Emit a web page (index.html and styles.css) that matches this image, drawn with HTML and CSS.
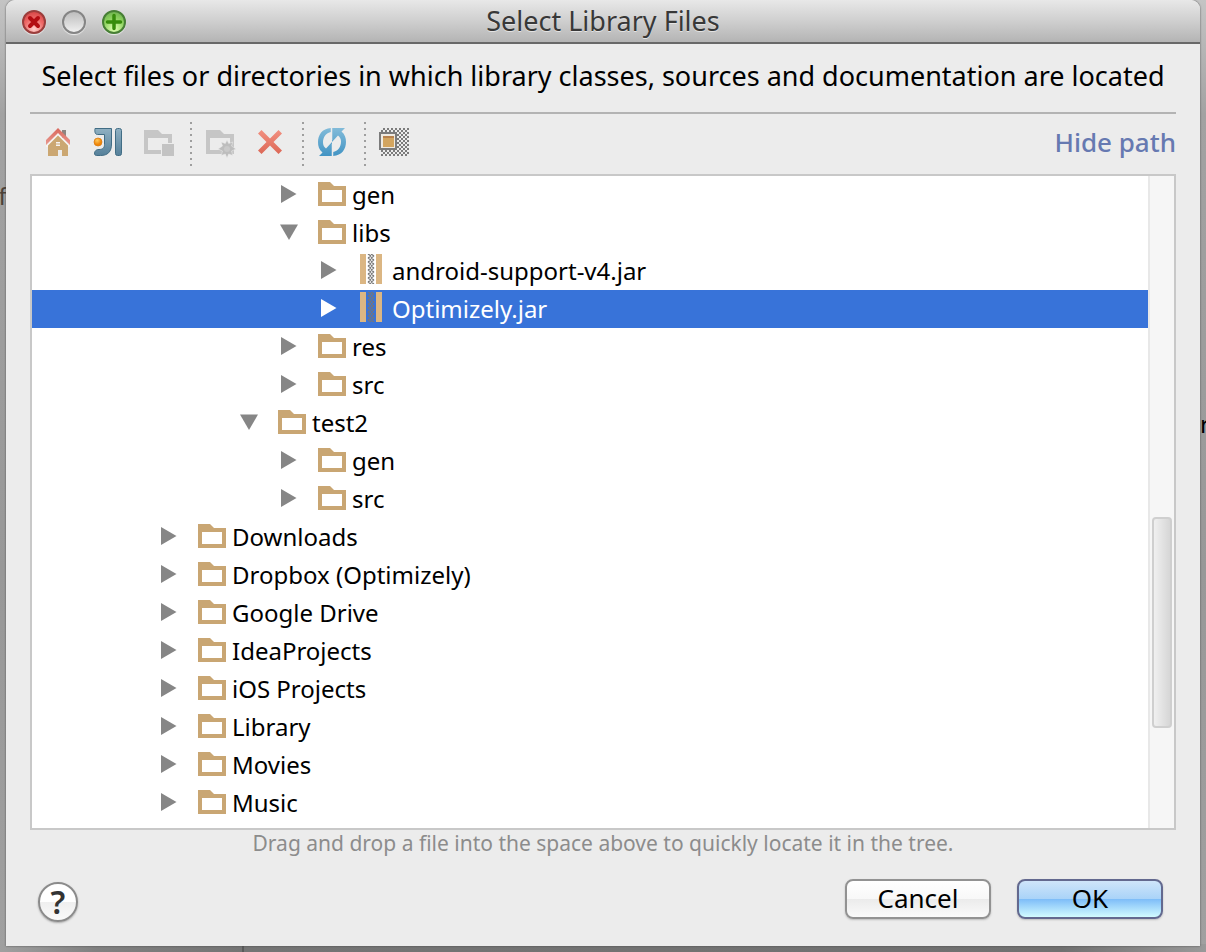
FILE: index.html
```html
<!DOCTYPE html>
<html lang="en">
<head>
<meta charset="utf-8">
<title>Select Library Files</title>
<link rel="stylesheet" href="styles.css">
</head>
<body>
<svg class="defs" aria-hidden="true">
  <defs>
    <symbol id="folder" viewBox="0 0 28 24"><path fill="#c9a673" fill-rule="evenodd" d="M0 0h12l4 4h12v20H0zM4 8v12h20V8z"/></symbol>
    <symbol id="jar" viewBox="0 0 28 30"><path fill="#dbb683" d="M2 0h6v30H2zM18 0h6v30h-6z"/><path fill="none" stroke="#777" stroke-width="1.300" d="M10 0l3 2M13 0l3 2M10 4l3-2M13 4l3-2M10 4l3 2M13 4l3 2M10 8l3-2M13 8l3-2M10 8l3 2M13 8l3 2M10 12l3-2M13 12l3-2M10 12l3 2M13 12l3 2M10 16l3-2M13 16l3-2M10 16l3 2M13 16l3 2M10 20l3-2M13 20l3-2M10 20l3 2M13 20l3 2M10 24l3-2M13 24l3-2M10 24l3 2M13 24l3 2M10 28l3-2M13 28l3-2M10 28l3 2M13 28l3 2"/></symbol>
    <symbol id="arrow" viewBox="0 0 18 18"><path fill="currentColor" d="M1 0l15.500 9L1 18z"/></symbol>
    <symbol id="arrow-open" viewBox="0 0 18 18"><path fill="currentColor" d="M0 1.500h18L9 17z"/></symbol>
    <linearGradient id="steel" x2="0" y2="1"><stop stop-color="#8fb0c2"/><stop offset="1" stop-color="#55809a"/></linearGradient>
    <linearGradient id="roof" x2="0" y2="1"><stop stop-color="#d9675c"/><stop offset="1" stop-color="#e99a90"/></linearGradient>
    <linearGradient id="cross" x2="0" y2="1"><stop stop-color="#f29080"/><stop offset="1" stop-color="#dc6857"/></linearGradient>
    <linearGradient id="sync" x2="0" y2="1"><stop stop-color="#82bbd9"/><stop offset="1" stop-color="#4294c4"/></linearGradient>
    <radialGradient id="orange" cx=".4" cy=".3"><stop stop-color="#ffc95c"/><stop offset="1" stop-color="#ef8609"/></radialGradient>
    <pattern id="checker" x="3" y="2" width="4" height="4" patternUnits="userSpaceOnUse"><path fill="#7b7b7b" d="M2 0h2v2H2zM0 2h2v2H0z"/></pattern>
  </defs>
</svg>
<span class="behind behind-left" aria-hidden="true">of</span>
<span class="behind behind-right" aria-hidden="true">r</span>
<main class="dialog">
  <header class="titlebar">
    <div class="lights">
      <button class="light red" aria-label="Close"><svg viewBox="0 0 24 24"><path d="M8 8l8 8M16 8l-8 8" stroke="#b30d12" stroke-width="4" stroke-linecap="round"/></svg></button>
      <button class="light gray" aria-label="Minimize"></button>
      <button class="light green" aria-label="Zoom"><svg viewBox="0 0 24 24"><path d="M12 5.500v13M5.500 12h13" stroke="#378c0c" stroke-width="3.500" stroke-linecap="round"/></svg></button>
    </div>
    <h1 class="title">Select Library Files</h1>
  </header>
  <div class="content">
    <p class="prompt">Select files or directories in which library classes, sources and documentation are located</p>
    <div class="toolbar">
      <button class="tool" aria-label="Home"><svg viewBox="0 0 32 32"><path fill="#8d8581" d="M20 4h4v8h-4z"/><path fill="#f6f4f2" d="M16 7L4 19v2h24v-2z"/><path fill="url(#roof)" d="M16 2l12 12v5L16 7 4 19v-5z"/><path fill="#cba772" d="M16 9.500l10 10V30h-6v-6h-4v6H6V19.500z"/><path fill="#f6f4f2" d="M14 16h4v4h-4z"/><path stroke="#cba772" d="M14 18h4"/></svg></button>
      <button class="tool" aria-label="Project directory"><svg viewBox="0 0 32 32"><path fill="url(#steel)" stroke="#416d85" stroke-width="1" d="M3 2.500h16.500V18c0 8-4 11.500-11 11.500H4.500c-2 0-2.500-2-1.500-4 1-1.500 2-2 4-2 4 0 5.500-2 5.500-5V8.500H5.500c-2.500 0-3-3-2.500-6z"/><rect x="23.500" y="2.500" width="6" height="27" rx="2" fill="url(#steel)" stroke="#416d85"/><circle cx="6" cy="16" r="4" fill="url(#orange)" stroke="#d8790f" stroke-width=".7"/></svg></button>
      <button class="tool" aria-label="Module directory" disabled><svg viewBox="0 0 32 32"><path fill="#c6c6c6" fill-rule="evenodd" d="M2 4h14l4 4h10v20H2zM6 12v12h20V12z"/><path fill="#c3c3c3" stroke="#ececec" d="M19.500 17.500h13v13h-13z"/></svg></button>
      <span class="divider"></span>
      <button class="tool" aria-label="New folder" disabled><svg viewBox="0 0 32 32"><path fill="#c6c6c6" fill-rule="evenodd" d="M2 4h14l4 4h10v20H2zM6 12v12h20V12z"/><path fill="#bdbdbd" stroke="#ececec" stroke-width=".5" d="M23 14l1.700 3.500 4.100-1.500-1.300 4 4.500 3-4.500 2 1.300 4.500-4.100-1.500L23 32l-1.700-4-4.100 1.500 1.300-4.500-4.500-2 4.500-3-1.300-4 4.100 1.500z"/><circle cx="23" cy="23" r="3" fill="#c9c9c9"/></svg></button>
      <button class="tool" aria-label="Delete"><svg viewBox="0 0 32 32"><path fill="url(#cross)" d="M7.500 4l8.500 8.500L24.500 4 28 7.500 19.500 16l8.500 8.500-3.500 3.500-8.500-8.500L7.500 28 4 24.500l8.500-8.500L4 7.500z"/></svg></button>
      <span class="divider"></span>
      <button class="tool" aria-label="Refresh"><svg viewBox="0 0 32 32"><g fill="url(#sync)"><path d="M15 2C6 2.500 2 9 2 16c0 4 1 7.500 4.500 10.500L3 30h13V16l-6 6.500C8 21 7 19 7 16.500 7 11 10 7 15 6z"/><path d="M17 30c9-.5 13-7 13-14 0-4-1-7.500-4.500-10.500L29 2H16v14l6-6.500c2 1.500 3 3.500 3 6 0 5.500-3 9.500-8 10.500z"/></g><path stroke="#ececec" stroke-width="1.500" d="M15.500 2v12M16.500 18v12"/></svg></button>
      <span class="divider"></span>
      <button class="tool" aria-label="Show hidden files"><svg viewBox="0 0 32 32"><path fill="url(#checker)" d="M3 2h28v28H3z"/><path fill="#efeae2" stroke="#7b7b7b" stroke-width="2" d="M2 7h16v16H2z"/><path fill="#d3a55f" d="M5 10h11v11H5z"/><path fill="#b8824d" d="M5 10h11v2H5z"/></svg></button>
      <a class="hide-path" href="#">Hide path</a>
    </div>
    <div class="tree-box">
      <ul class="tree" role="tree" aria-label="Files">
        <li class="row l3" role="treeitem"><svg class="arrow"><use href="#arrow"/></svg><svg class="icon"><use href="#folder"/></svg>gen</li>
        <li class="row l3" role="treeitem"><svg class="arrow"><use href="#arrow-open"/></svg><svg class="icon"><use href="#folder"/></svg>libs</li>
        <li class="row l4" role="treeitem"><svg class="arrow"><use href="#arrow"/></svg><svg class="icon jar"><use href="#jar"/></svg>android-support-v4.jar</li>
        <li class="row l4 selected" role="treeitem" aria-selected="true"><svg class="arrow"><use href="#arrow"/></svg><svg class="icon jar"><use href="#jar"/></svg>Optimizely.jar</li>
        <li class="row l3" role="treeitem"><svg class="arrow"><use href="#arrow"/></svg><svg class="icon"><use href="#folder"/></svg>res</li>
        <li class="row l3" role="treeitem"><svg class="arrow"><use href="#arrow"/></svg><svg class="icon"><use href="#folder"/></svg>src</li>
        <li class="row l2" role="treeitem"><svg class="arrow"><use href="#arrow-open"/></svg><svg class="icon"><use href="#folder"/></svg>test2</li>
        <li class="row l3" role="treeitem"><svg class="arrow"><use href="#arrow"/></svg><svg class="icon"><use href="#folder"/></svg>gen</li>
        <li class="row l3" role="treeitem"><svg class="arrow"><use href="#arrow"/></svg><svg class="icon"><use href="#folder"/></svg>src</li>
        <li class="row" role="treeitem"><svg class="arrow"><use href="#arrow"/></svg><svg class="icon"><use href="#folder"/></svg>Downloads</li>
        <li class="row" role="treeitem"><svg class="arrow"><use href="#arrow"/></svg><svg class="icon"><use href="#folder"/></svg>Dropbox (Optimizely)</li>
        <li class="row" role="treeitem"><svg class="arrow"><use href="#arrow"/></svg><svg class="icon"><use href="#folder"/></svg>Google Drive</li>
        <li class="row" role="treeitem"><svg class="arrow"><use href="#arrow"/></svg><svg class="icon"><use href="#folder"/></svg>IdeaProjects</li>
        <li class="row" role="treeitem"><svg class="arrow"><use href="#arrow"/></svg><svg class="icon"><use href="#folder"/></svg>iOS Projects</li>
        <li class="row" role="treeitem"><svg class="arrow"><use href="#arrow"/></svg><svg class="icon"><use href="#folder"/></svg>Library</li>
        <li class="row" role="treeitem"><svg class="arrow"><use href="#arrow"/></svg><svg class="icon"><use href="#folder"/></svg>Movies</li>
        <li class="row" role="treeitem"><svg class="arrow"><use href="#arrow"/></svg><svg class="icon"><use href="#folder"/></svg>Music</li>
      </ul>
      <div class="track"><div class="thumb"></div></div>
    </div>
    <p class="hint">Drag and drop a file into the space above to quickly locate it in the tree.</p>
    <footer class="footer">
      <button class="help" aria-label="Help">?</button>
      <div class="actions">
        <button class="btn">Cancel</button>
        <button class="btn primary">OK</button>
      </div>
    </footer>
  </div>
</main>
</body>
</html>
```
FILE: styles.css
```css
* { box-sizing: border-box; }
body {
  margin: 0;
  min-height: 100vh;
  display: flex;
  position: relative;
  overflow: hidden;
  padding: 0 6px 6px;
  font-family: "Noto Sans", "Open Sans", sans-serif;
  font-size: 24px;
  color: #000;
  background:
    linear-gradient(#5a5a5a, #5a5a5a) 242px 100% / 2px 8px no-repeat,
    linear-gradient(90deg, #a0a0a0, #808080 8%, #747474 20%, #707070 88%, #999) 0 100% / 100% 8px no-repeat,
    linear-gradient(#c4c4c4, #a2a2a2 12%, #989898 60%, #a0a0a0);
}
button { font: inherit; color: inherit; padding: 0; border: 0; background: none; }
h1, p, ul { margin: 0; padding: 0; }
.defs { position: absolute; width: 0; height: 0; }
.behind { position: absolute; line-height: 24px; }
.behind-left { left: -16px; top: 184px; color: #4c4238; }
.behind-right { left: calc(100% - 6px); top: 412px; }
.dialog {
  position: relative;
  flex: 1;
  display: flex;
  flex-direction: column;
  background: #ececec;
  border-radius: 9px 9px 0 0;
  box-shadow: 0 0 2px #444;
}
.titlebar {
  display: grid;
  grid-template-columns: 1fr auto 1fr;
  align-items: center;
  height: 44px;
  padding: 0 16px;
  background: linear-gradient(#e8e8e8, #cfcfcf 50%, #b4b4b4);
  border-bottom: 2px solid #686868;
  border-radius: 9px 9px 0 0;
}
.lights { display: flex; gap: 16px; padding-top: 2px; }
.light {
  width: 24px;
  height: 24px;
  border-radius: 50%;
  border: 2px solid #777;
  box-shadow: 0 1px 1px #eee;
}
.light svg { display: block; width: 24px; height: 24px; margin: -2px; }
.red { border-color: #9b3e3c; background: radial-gradient(circle at 50% 85%, #ffd0cc, #ef6b69 50%, #cf3b3c); }
.gray { border-color: #858585; background: linear-gradient(#bdbdbd, #d6d6d6 50%, #f0f0f0); }
.green { border-color: #477f35; background: radial-gradient(circle at 50% 85%, #e0ffb4, #8dd25f 55%, #66a94b); }
.title { font-size: 27px; font-weight: 400; line-height: 42px; color: #383838; text-shadow: 0 1px 0 #e4e4e4; }
.content { flex: 1; display: flex; flex-direction: column; padding: 0 24px; }
.prompt {
  height: 70px;
  line-height: 64px;
  font-size: 27px;
  text-align: center;
  white-space: nowrap;
  border-bottom: 2px solid #b3b3b3;
}
.toolbar { display: flex; align-items: center; height: 60px; padding: 0 0 4px 3px; }
.tool { width: 50px; height: 32px; }
.tool svg { display: block; width: 32px; height: 32px; margin: 0 auto; overflow: visible; }
.divider {
  width: 12px;
  height: 44px;
  margin-top: 4px;
  background: repeating-linear-gradient(#9e9e9e 0 2px, transparent 2px 6px) 7px 0 / 2px 100% no-repeat;
}
.hide-path { margin-left: auto; font-size: 26px; font-weight: 500; color: #6679b1; text-decoration: none; }
.tree-box { flex: 1; display: flex; background: #fff; border: 2px solid #c8c8c8; }
.tree { flex: 1; list-style: none; }
.row { display: flex; align-items: center; height: 38px; line-height: 38px; padding-left: 128px; }
.l2 { padding-left: 208px; }
.l3 { padding-left: 248px; }
.l4 { padding-left: 288px; }
.arrow { width: 18px; height: 18px; color: #868686; margin: 0 20px 2px 0; overflow: visible; }
.icon { width: 28px; height: 24px; margin: 0 6px 2px 0; }
.jar { height: 30px; margin-bottom: 4px; }
.selected { color: #fff; background: #3873d9; }
.selected .arrow { color: #fff; }
.track {
  display: flex;
  width: 26px;
  padding: 0 2px;
  flex-direction: column;
  background: #f6f6f6;
  border-left: 2px solid #e8e8e8;
}
.track::before { content: ""; flex: 342 0 0; }
.track::after { content: ""; flex: 100 0 0; }
.thumb {
  flex: 208 0 0;
  width: 20px;
  border: 2px solid #cfcfcf;
  border-radius: 4px;
  background: linear-gradient(90deg, #f0f0f0, #d6d6d6);
}
.hint { line-height: 26px; font-size: 21px; text-align: center; color: #8c8c8c; }
.footer { display: flex; justify-content: space-between; align-items: center; height: 90px; padding: 0 13px 4px 8px; }
.help {
  width: 40px;
  height: 40px;
  margin-top: 6px;
  border: 2px solid #8b8b8b;
  border-radius: 50%;
  font-size: 32px;
  font-weight: 600;
  line-height: 36px;
  color: #333;
  background: linear-gradient(#fff 50%, #efefef 50%, #fafafa);
  box-shadow: 0 1px 2px #aaa;
}
.actions { display: flex; gap: 26px; }
.btn {
  width: 146px;
  height: 40px;
  padding-bottom: 2px;
  font-size: 26px;
  line-height: 34px;
  border: 2px solid #929292;
  border-radius: 8px;
  background: linear-gradient(#fff, #f8f8f8 50%, #ebebeb 50%, #fafafa);
  box-shadow: 0 1px 2px #bbb;
}
.primary { border-color: #63698f; background: linear-gradient(#cfe5fa, #a9d3f8 50%, #7dbcf8 50%, #d2fbff); }
```
